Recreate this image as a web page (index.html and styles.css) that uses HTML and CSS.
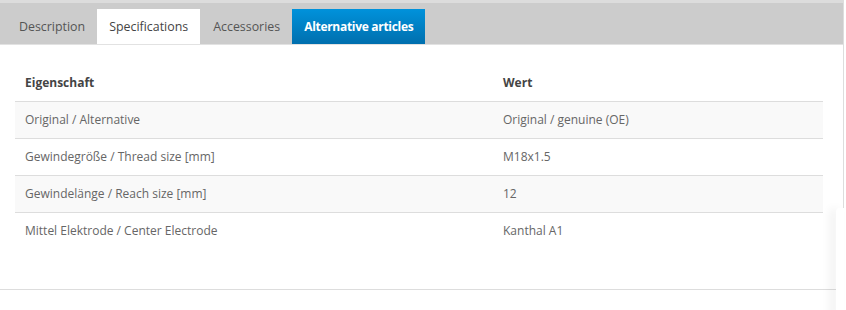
FILE: index.html
```html
<!DOCTYPE html>
<html>
<head>
<meta charset="utf-8">
<link rel="stylesheet" href="styles.css">
</head>
<body>
<div class="page">
  <nav class="tabs">
    <span class="tab">Description</span>
    <span class="tab active">Specifications</span>
    <span class="tab wide">Accessories</span>
    <span class="tab highlight">Alternative articles</span>
  </nav>
  <div class="panel">
    <table class="spec">
      <thead>
        <tr><th class="col-prop">Eigenschaft</th><th>Wert</th></tr>
      </thead>
      <tbody>
        <tr><td>Original / Alternative</td><td>Original / genuine (OE)</td></tr>
        <tr><td>Gewindegröße / Thread size [mm]</td><td>M18x1.5</td></tr>
        <tr><td>Gewindelänge / Reach size [mm]</td><td>12</td></tr>
        <tr><td>Mittel Elektrode / Center Electrode</td><td>Kanthal A1</td></tr>
      </tbody>
    </table>
  </div>
  <div class="side-panel"></div>
</div>
</body>
</html>
```

FILE: styles.css
```css
html, body {
  margin: 0;
  padding: 0;
  background: #fff;
}
body {
  font-family: "Open Sans", "Liberation Sans", sans-serif;
  font-size: 12px;
  color: #666;
  overflow: hidden;
}
.page {
  position: relative;
  width: 843px;
  height: 310px;
  border-right: 1px solid #ddd;
}
.tabs {
  display: flex;
  height: 35px;
  padding: 6px 0 0 7px;
  background: #ccc;
  border-top: 3px solid #dcdcdc;
  border-bottom: 1px solid #e2e2e2;
}
.tab {
  display: block;
  padding: 1px 12px 0;
  line-height: 34px;
  font-size: 12.4px;
  color: #555;
  white-space: nowrap;
}
.tab.wide {
  padding: 1px 12px 0 13px;
}
.tab.active {
  background: #fff;
  color: #444;
}
.tab.highlight {
  background: linear-gradient(#0092db, #006fae);
  color: #fff;
  font-weight: 700;
  font-size: 12px;
  letter-spacing: -0.3px;
}
.panel {
  padding: 20px 0 40px 15px;
  border-bottom: 1px solid #ddd;
}
.spec {
  width: 808px;
  border-collapse: collapse;
}
.spec th, .spec td {
  height: 34px;
  padding: 0 10px 2px;
  text-align: left;
  border-bottom: 1px solid #ddd;
}
.spec th {
  font-weight: 700;
  color: #444;
}
.spec .col-prop {
  width: 458px;
}
.spec tbody tr:nth-child(odd) {
  background: #f9f9f9;
}
.spec tbody tr:last-child td {
  border-bottom: none;
}
.side-panel {
  position: absolute;
  right: -1px;
  top: 208px;
  width: 8px;
  height: 110px;
  background: #fff;
  border-top-left-radius: 4px;
  box-shadow: -6px 0 10px rgba(0,0,0,0.06);
}
```
